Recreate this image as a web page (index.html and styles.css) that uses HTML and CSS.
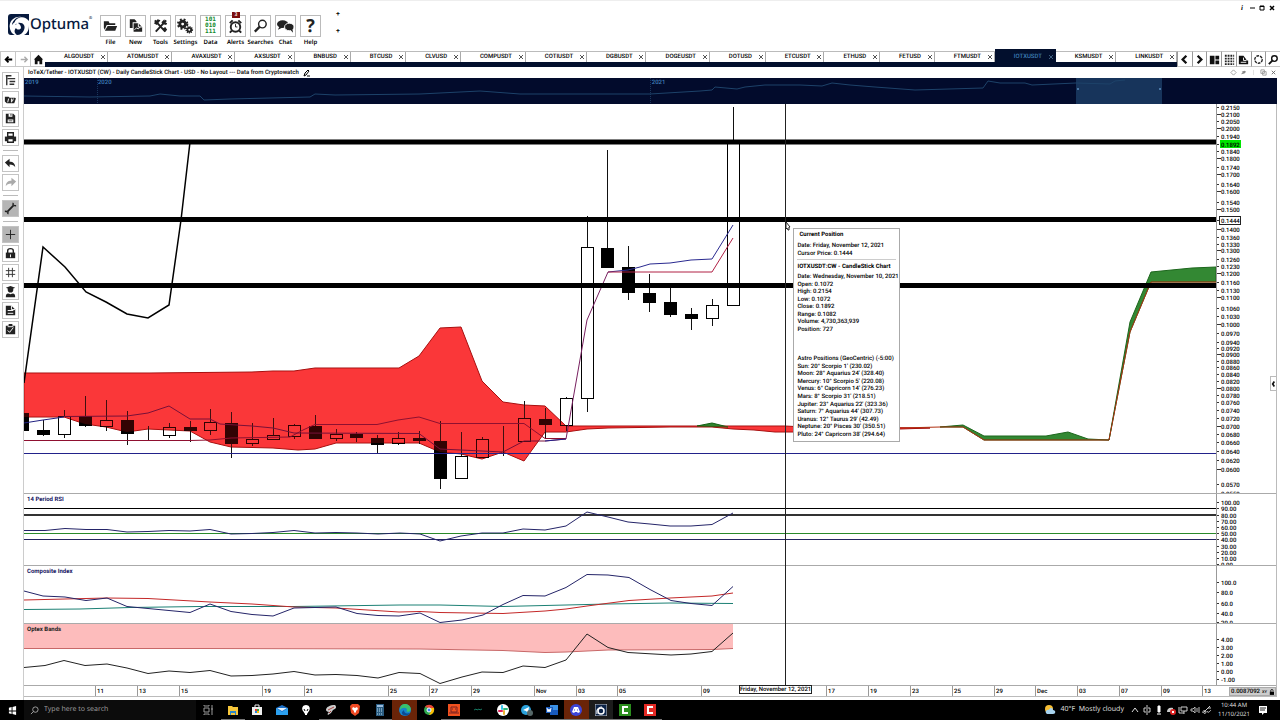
FILE: index.html
```html
<!DOCTYPE html>
<html lang="en">
<head>
<meta charset="utf-8">
<title>Optuma - IOTXUSDT</title>
<link rel="stylesheet" href="styles.css">
</head>
<body>
<header class="app-header">
  <div class="logo">
    <svg class="logo-mark" viewBox="0 0 21 21"><path fill="#071a3e" d="M0 3a3 3 0 0 1 3-3h18v7c-3-4-8-5-12-2-3 2-3 5 0 5-4 1-5 6-2 11H3a3 3 0 0 1-3-3z"/><path fill="#fff" d="M2 15C0 7 7 2 13 3c-6 0-9 5-9 8 2-4 7-5 10-4-6 0-9 5-6 11 1 2 2 3 3 3H7c-3-1-4-3-5-6z"/><path fill="#071a3e" d="M10 9c5-1 8 3 6 7-1 3-4 5-7 5-3-2-3-5-1-7 1 2 4 2 5 0 0-2-1-4-3-5zM21 11v10h-5c4-2 5-6 5-10z"/></svg>
    <span class="logo-name">Optuma</span><span class="logo-reg">®</span>
  </div>
  <nav class="toolbar" aria-label="Main toolbar">
    <button class="tool"><span class="tool-box"><svg viewBox="0 0 20 20"><path d="M3 5h5l1 2h6v2H6l-2 5-1-2zM7 10h10l-2 5H4z"/></svg></span>File</button>
    <button class="tool"><span class="tool-box"><svg viewBox="0 0 20 20"><path d="M4 3h5l2 2v1H7v6H4zM8 7h5l4 4v5H8z"/><path d="M13 7v4h4M9 14l2-2 2 1 2-2" stroke="#fff" fill="none"/></svg></span>New</button>
    <button class="tool"><span class="tool-box"><svg viewBox="0 0 20 20"><path d="M4 4l11 12M16 4L5 16" stroke="#222" stroke-width="2" fill="none"/><path d="M3 7l4-4 3 1-4 5zM14 3l1 3 2 1-1 2-4-1-1-2zM12 13l3-2 2 3-2 2z"/></svg></span>Tools</button>
    <button class="tool"><span class="tool-box"><svg viewBox="0 0 20 20"><circle cx="7" cy="8" r="3" fill="none" stroke="#222" stroke-width="3"/><circle cx="7" cy="8" r="5" fill="none" stroke="#222" stroke-width="2" stroke-dasharray="2 2"/><circle cx="14" cy="14" r="2" fill="none" stroke="#222" stroke-width="2"/><circle cx="14" cy="14" r="3" fill="none" stroke="#222" stroke-width="2" stroke-dasharray="1 1"/></svg></span>Settings</button>
    <button class="tool"><span class="tool-box bits"><i>101</i><i>010</i><i>111</i></span>Data</button>
    <button class="tool"><span class="tool-box"><span class="badge">3</span><svg viewBox="0 0 20 20"><g fill="none" stroke="#222" stroke-width="2"><circle cx="10" cy="11" r="5"/><path d="M4 7l3-3M16 7l-3-3M6 15l-2 2M14 15l2 2"/><path d="M10 8v3h2" stroke-width="1"/></g></svg></span>Alerts</button>
    <button class="tool"><span class="tool-box"><svg viewBox="0 0 20 20"><g fill="none" stroke="#222"><circle cx="12" cy="8" r="4" stroke-width="1.5"/><path d="M9 11l-5 5" stroke-width="2.5"/></g></svg></span>Searches</button>
    <button class="tool"><span class="tool-box"><svg viewBox="0 0 20 20"><ellipse cx="7" cy="8" rx="6" ry="4"/><path d="M4 10l-2 4 6-3z"/><ellipse cx="14" cy="11" rx="5" ry="4" stroke="#fff"/><path d="M15 14l3 3-1-5z"/></svg></span>Chat</button>
    <button class="tool"><span class="tool-box help">?</span>Help</button>
  </nav>
  <div class="plus-stack"><button aria-label="Add row">+</button><button aria-label="Add row below">+</button></div>
  <div class="window-controls">
    <button class="info">i</button>
    <button aria-label="Minimise"><svg viewBox="0 0 6 6"><path d="M1 3h5" stroke="#000"/></svg></button>
    <button aria-label="Maximise"><svg viewBox="0 0 6 6"><path d="M1 1h4v4H1zM1 1.500h4" fill="none" stroke="#000"/></svg></button>
    <button aria-label="Close"><svg viewBox="0 0 6 6"><path d="M1 1l4 4M5 1L1 5" stroke="#000" stroke-width="1.500"/></svg></button>
  </div>
</header>

<div class="tabbar">
  <div class="tab-nav">
    <button aria-label="Back"><svg viewBox="0 0 14 14"><path d="M11 7H4M7 4L4 7l3 3" fill="none" stroke="#000" stroke-width="2"/></svg></button>
    <button aria-label="Forward"><svg viewBox="0 0 14 14"><path d="M4 7h6M8 4l3 3-3 3" fill="none" stroke="#aaa" stroke-width="1.500"/></svg></button>
    <button aria-label="Home"><svg viewBox="0 0 14 14"><path d="M7 2l5 5h-1v5H8V9H6v3H3V7H2z"/></svg></button>
  </div>
  <div class="tabs" id="tabs" role="tablist"></div>
  <div class="tab-tools">
    <button aria-label="Previous"><svg viewBox="0 0 14 14"><path d="M9 3L5 7l4 4" fill="none" stroke="#111" stroke-width="2.500"/></svg></button>
    <button aria-label="Next"><svg viewBox="0 0 14 14"><path d="M5 3l4 4-4 4" fill="none" stroke="#111" stroke-width="2.500"/></svg></button>
    <button aria-label="Layouts"><svg viewBox="0 0 14 14"><path d="M2 3h5v9H2zM8 3h4v4H8zM8 8h4v4H8z"/></svg></button>
    <button aria-label="Grid"><svg viewBox="0 0 14 14"><path d="M2 3h10M2 6h10M2 9h10M2 12h10" stroke="#222" stroke-width="2" stroke-dasharray="2 1"/></svg></button>
    <button aria-label="Export"><svg viewBox="0 0 14 14"><path d="M2 3h5l3 4v1h2v4H2z"/><path d="M7 5v3h3M4 10h6" stroke="#fff" fill="none"/></svg></button>
    <button aria-label="Refresh"><svg viewBox="0 0 14 14"><circle cx="7" cy="7" r="4" fill="none" stroke="#222" stroke-width="1.500" stroke-dasharray="3 1"/></svg></button>
    <button aria-label="Find"><svg viewBox="0 0 14 14"><circle cx="8" cy="6" r="3" fill="none" stroke="#111" stroke-width="1.500"/><path d="M6 8l-4 4" stroke="#111" stroke-width="2"/></svg></button>
  </div>
</div>

<div class="workspace">
  <aside class="sidebar">
    <button aria-label="Structure"><svg viewBox="0 0 16 16"><path d="M3 3h6M4 3v10M5 6h8M7 9h6M7 12h5" fill="none" stroke="#333" stroke-width="1.500"/></svg></button>
    <button aria-label="Open"><svg viewBox="0 0 16 16"><path d="M2 5h4l1 1h6v1l1-1-2 6H4L2 10z"/><path d="M6 7l-1 4M9 7v4M11 7l-1 3" stroke="#fff" fill="none"/></svg></button>
    <button aria-label="Save"><svg viewBox="0 0 16 16"><path d="M3 3h8l2 2v8H3z"/><path fill="#fff" d="M6 3h4v3H6zM5 9h6v3H5z"/><path d="M8 3h1v2H8zM6 10h4v1H6z"/></svg></button>
    <button aria-label="Print"><svg viewBox="0 0 16 16"><path d="M2 7h12v5H2z"/><path d="M5 3h6v4H5zM5 9h6v4H5z" fill="#fff" stroke="#222" stroke-width="1.500"/></svg></button>
    <hr>
    <button aria-label="Undo"><svg viewBox="0 0 16 16"><path d="M2 7l5-4v3c4 0 6 2 6 6-1-2-3-3-6-3v3z"/></svg></button>
    <button aria-label="Redo"><svg viewBox="0 0 16 16"><path fill="#aaa" d="M14 7L9 3v3c-4 0-6 2-6 6 1-2 3-3 6-3v3z"/></svg></button>
    <hr>
    <button class="on" aria-label="Chart tools"><svg viewBox="0 0 16 16"><g fill="none" stroke="#222"><path d="M5 11l6-6" stroke-width="2"/><path d="M11 2c-1 2 0 3 3 3M2 11c3 0 4 1 3 3" stroke-width="1.500"/></g></svg></button>
    <hr>
    <button class="on" aria-label="Crosshair"><svg viewBox="0 0 16 16"><path d="M8 3v10M3 8h10" stroke="#222"/></svg></button>
    <button aria-label="Lock"><svg viewBox="0 0 16 16"><path d="M3 7h10v6H3z"/><path d="M5 8V5c0-3 6-3 6 0v3" fill="none" stroke="#222" stroke-width="1.500"/><path d="M8 9v3" stroke="#fff"/></svg></button>
    <button aria-label="Grid lines"><svg viewBox="0 0 16 16"><path d="M6 3v10M10 3v10M3 6h10M3 10h10" stroke="#333"/></svg></button>
    <button aria-label="Learn"><svg viewBox="0 0 16 16"><path d="M3 4l5-2 5 2-5 2z"/><circle cx="8" cy="6" r="3"/><path d="M3 14c0-5 3-4 5-3 2-1 5-2 5 3z"/></svg></button>
    <button aria-label="Notes"><svg viewBox="0 0 16 16"><path d="M3 3h6l4 4v6H3z"/><path d="M9 3v4h4M5 8h6M5 11h6" stroke="#fff" fill="none"/></svg></button>
    <button aria-label="Checklist"><svg viewBox="0 0 16 16"><path d="M3 4h10v9H3zM6 2h4v2H6z"/><path d="M5 9l2 2 4-5M5 5h6" stroke="#fff" fill="none"/></svg></button>
  </aside>

  <main class="chart-area">
    <div class="chart-title">
      <h1>IoTeX/Tether - IOTXUSDT (CW) - Daily CandleStick Chart - USD - No Layout --- Data from Cryptowatch</h1>
      <svg class="pencil" viewBox="0 0 8 8"><path d="M1 7l1-3 3-3 1 1-3 4zM4 7h3" stroke="#000" fill="none"/></svg>
      <div class="chart-title-tools">
        <svg viewBox="0 0 8 8"><path d="M4 1l3 3-3 3-3-3z" fill="none" stroke="#999"/></svg>
        <svg viewBox="0 0 8 8"><path d="M1 6l2-2-1-1 3-1 2 1-2 2z" fill="#888"/></svg>
        <svg viewBox="0 0 8 8"><path d="M4 1v6" stroke="#ddd"/></svg>
        <svg viewBox="0 0 8 8"><path d="M1 1h4v4H1zM3 3h4v4H3z" fill="none" stroke="#999"/></svg>
        <svg viewBox="0 0 8 8"><path d="M2 2l4 4M6 2L2 6" stroke="#666"/></svg>
      </div>
    </div>
    <div class="overview">
      <svg class="plot" viewBox="24 78 1253 26" preserveAspectRatio="none">
        <rect x="1076" y="78" width="86" height="26" fill="#17345b"/>
        <path d="M97.500 78v26M650.500 78v26" stroke="#1a365c" stroke-dasharray="1 1"/>
        <path d="M1077 89h2M1159 89h2" stroke="#4a77a5" stroke-width="2"/>
        <polyline fill="none" stroke="#1d4269" points="24,96 90,97 150,96 160,94 180,96 200,96 204,100 230,99 310,97 315,94 335,95 420,94 440,93 480,91 520,94 650,94 700,91 712,90 715,87 737,89 745,87 765,85 800,85 822,86 832,83 850,85 875,87 915,90 983,88 988,81 1000,83 1025,83 1032,85 1076,83 1110,84 1115,81 1125,80"/>
      </svg>
      <svg class="years"><text x="1" y="6">2019</text><text x="5.900%" y="6">2020</text><text x="50.100%" y="6">2021</text></svg>
    </div>

    <div class="panels">
      <section class="panel panel-price">
        <svg class="plot" viewBox="24 104 1192 389" preserveAspectRatio="none">
          <g id="cloud"></g>
          <g id="candles"></g>
          <g id="indicators"></g>
        </svg>
        <svg class="axis" id="axis-price"></svg>
      </section>
      <section class="panel panel-rsi">
        <h2>14 Period RSI</h2>
        <svg class="plot" id="plot-rsi" viewBox="24 494 1192 71" preserveAspectRatio="none"></svg>
        <svg class="axis" id="axis-rsi"></svg>
      </section>
      <section class="panel panel-composite">
        <h2>Composite Index</h2>
        <svg class="plot" id="plot-composite" viewBox="24 566 1192 57" preserveAspectRatio="none"></svg>
        <svg class="axis" id="axis-composite"></svg>
      </section>
      <section class="panel panel-optex">
        <h2 class="dark">Optex Bands</h2>
        <svg class="plot" id="plot-optex" viewBox="24 624 1192 61" preserveAspectRatio="none"></svg>
        <svg class="axis" id="axis-optex"></svg>
      </section>
      <div class="overlay">
        <div class="crosshair"></div>
        <svg class="pointer" viewBox="0 0 6 10"><path d="M1 1v7l1-1 1 2h1V6h1z" fill="#fff" stroke="#222"/></svg>
        <div class="info-card">
          <h3 class="indent">Current Position</h3>
          <ul class="rows-2"><li>Date: Friday, November 12, 2021</li><li>Cursor Price: 0.1444</li></ul>
          <hr>
          <h3>IOTXUSDT:CW - CandleStick Chart</h3>
          <ul class="rows-8"><li>Date: Wednesday, November 10, 2021</li><li>Open: 0.1072</li><li>High: 0.2154</li><li>Low: 0.1072</li><li>Close: 0.1892</li><li>Range: 0.1082</li><li>Volume: 4,730,363,939</li><li>Position: 727</li></ul>
          <ul class="rows-11"><li>Astro Positions (GeoCentric) (-5:00)</li><li>Sun: 20° Scorpio 1' (230.02)</li><li>Moon: 28° Aquarius 24' (328.40)</li><li>Mercury: 10° Scorpio 5' (220.08)</li><li>Venus: 6° Capricorn 14' (276.23)</li><li>Mars: 8° Scorpio 31' (218.51)</li><li>Jupiter: 23° Aquarius 22' (323.36)</li><li>Saturn: 7° Aquarius 44' (307.73)</li><li>Uranus: 12° Taurus 29' (42.49)</li><li>Neptune: 20° Pisces 30' (350.51)</li><li>Pluto: 24° Capricorn 38' (294.64)</li></ul>
        </div>
      </div>
      <button class="drawer" aria-label="Open panel"><svg viewBox="0 0 6 10"><path d="M4 2L2 5l2 3" fill="none" stroke="#111" stroke-width="2"/></svg></button>
    </div>

    <div class="date-axis">
      <svg id="date-ticks"></svg>
      <span class="date-flag">Friday, November 12, 2021</span>
      <div class="scale-box"><span>0.0087092</span><span>XY</span><svg viewBox="0 0 6 7"><path d="M1 3h5v4H1z"/><path d="M2 3V2c0-2 3-2 3 0" fill="none" stroke="#000"/></svg></div>
    </div>
  </main>
</div>

<footer class="taskbar">
  <button class="start" aria-label="Start"><svg viewBox="0 0 10 10"><path fill="#fff" d="M1 2l3-1v4H1zM5 1l4-1v5H5zM1 6h3v3L1 8zM5 6h4v4L5 9z"/></svg></button>
  <label class="search"><svg viewBox="0 0 10 10"><circle cx="6" cy="4" r="3" fill="none" stroke="#aaa"/><path d="M4 6L1 9" stroke="#aaa"/></svg><input type="text" placeholder="Type here to search" aria-label="Search"></label>
  <div class="apps">
    <button aria-label="Task view"><svg viewBox="0 0 12 12"><path d="M2 4h5v4H2zM2 1v1h5V1M2 11v-1h5v1M10 1v10M9 5h2" fill="none" stroke="#999"/></svg></button>
    <button class="open" aria-label="File Explorer"><svg viewBox="0 0 12 12"><path fill="#f6c63a" d="M1 2h4l1 1h5v8H1z"/><path fill="#2c87c9" d="M3 7h6v4H8V9H4v2H3z"/></svg></button>
    <button aria-label="Store"><svg viewBox="0 0 12 12"><path fill="#eee" d="M1 3h10v8H1z"/><path d="M4 3V1h4v2" fill="none" stroke="#eee"/><path fill="#e33" d="M4 5h2v2H4z"/><path fill="#3a4" d="M6 5h2v2H6z"/><path fill="#28d" d="M4 7h2v2H4z"/><path fill="#fb0" d="M6 7h2v2H6z"/></svg></button>
    <button aria-label="Mail"><svg viewBox="0 0 12 12"><path fill="#1c70c8" d="M0 4l6-3 6 3v7H0z"/><path fill="#e5f2fc" d="M1 4h10L6 7z"/><path fill="#2ba0ef" d="M0 4l6 4 6-4v7H0z"/></svg></button>
    <button aria-label="Alienware"><svg viewBox="0 0 12 12"><path fill="#fff" d="M6 1c3 0 5 3 3 6l-2 3v1H5v-1L3 7C1 4 3 1 6 1z"/><path d="M4 5l1 2M8 5L7 7" stroke="#000"/></svg></button>
    <button class="open" aria-label="Satellite"><svg viewBox="0 0 12 12"><path fill="#ccc" d="M1 6c0-3 4-5 9-5 2 2 1 4-2 5l-2 3-3 2c-1-1 0-2 1-3-1 0-3-1-3-2z"/><path d="M3 6l6-3M4 9l2-2" stroke="#a44"/></svg></button>
    <button class="open" aria-label="Brave"><svg viewBox="0 0 12 12"><path fill="#f04a24" d="M3 0h6l2 2-1 7-4 3-4-3-1-7z"/><path d="M4 3l2 1 2-1 1 2-2 2v1l-1 1-1-1V7L3 5z" fill="#fff"/></svg></button>
    <button class="open" aria-label="Calculator"><svg viewBox="0 0 12 12"><path fill="#2b5d82" d="M2 0h8v12H2z"/><path d="M3 2h6" stroke="#9bd" stroke-width="2"/><path d="M3 5h6M3 7h6M3 10h6" stroke="#bde" stroke-dasharray="1 1"/></svg></button>
    <button class="hot" aria-label="Edge"><svg viewBox="0 0 12 12"><circle cx="6" cy="6" r="6" fill="#1684c9"/><path fill="#39c16c" d="M6 0c5 0 7 5 5 7-3 2-4 0-3-1 0-3-5-3-7 0 0-4 2-6 5-6z"/><path fill="#0b4c94" d="M5 6c0 3 2 4 6 3-2 4-9 3-8-1z"/></svg></button>
    <button aria-label="Chrome"><svg viewBox="0 0 12 12"><circle cx="6" cy="6" r="5" fill="#2da94f"/><path fill="#e94335" d="M2 3c2-3 7-3 9 1H6z"/><path fill="#fbbc05" d="M11 4c1 4-2 7-5 7l2-4V4z"/><circle cx="6" cy="6" r="2" fill="#4285f4" stroke="#fff"/></svg></button>
    <button class="open" aria-label="Orange bot"><svg viewBox="0 0 12 12"><path fill="#f0511f" d="M0 0h12v12H0z"/><path d="M3 3h6v5H3zM1 9h10M4 5h1M7 5h1" fill="none" stroke="#722"/></svg></button>
    <button class="open" aria-label="TradingView"><svg viewBox="0 0 12 12"><path d="M2 6l2-1 1 1 2-1 1 1 2-1" fill="none" stroke="#177b64"/></svg></button>
    <button class="open" aria-label="Slack"><svg viewBox="0 0 12 12"><circle cx="6" cy="6" r="6" fill="#fff"/><g stroke-width="2" stroke-linecap="round"><path d="M5 2v3" stroke="#36c5f0"/><path d="M7 5h3" stroke="#2eb67d"/><path d="M7 7v3" stroke="#ecb22e"/><path d="M2 7h3" stroke="#e01e5a"/></g></svg></button>
    <button class="open" aria-label="Telegram"><svg viewBox="0 0 12 12"><circle cx="5" cy="6" r="5" fill="#2aa1da"/><path fill="#fff" d="M2 6l6-3-1 6-2-2z"/><circle cx="9" cy="9" r="3" fill="#566"/></svg></button>
    <button class="open" aria-label="Word"><svg viewBox="0 0 12 12"><path fill="#3b91e5" d="M4 1h8v10H4z"/><path fill="#185abd" d="M0 3h7v6H0zM7 6h5v5H4V9h3z"/><path d="M1 4l1 4 1-3 1 3 1-4" stroke="#fff" fill="none"/></svg></button>
    <button class="hot open" aria-label="Discord"><svg viewBox="0 0 12 12"><circle cx="6" cy="6" r="6" fill="#3d45d8"/><path fill="#fff" d="M4 3h4l2 5-2 1-1-1H5L4 9 2 8z"/><path d="M4 6h1M7 6h1" stroke="#3d45d8"/></svg></button>
    <button class="warm open" aria-label="Optuma"><svg viewBox="0 0 12 12"><path d="M0 0h12v12H0z" fill="#0b2348" stroke="#ccc"/><circle cx="6" cy="7" r="3" fill="none" stroke="#fff" stroke-width="1.500"/><path d="M2 10c-1-4 1-7 5-7" fill="none" stroke="#fff"/></svg></button>
    <button class="open" aria-label="Camtasia"><svg viewBox="0 0 12 12"><path fill="#2b8d1d" d="M0 0h12v12H0z"/><path d="M9 3H4v6h5" stroke="#fff" stroke-width="2" fill="none"/></svg></button>
    <button class="open" aria-label="Recorder"><svg viewBox="0 0 12 12"><path fill="#e52a25" d="M0 0h12v12H0z"/><path d="M9 3H4v6h5" stroke="#fff" stroke-width="2" fill="none"/></svg></button>
  </div>
  <div class="tray">
    <svg class="weather-icon" viewBox="0 0 12 10"><circle cx="5" cy="4" r="4" fill="#f5bd34"/><path fill="#a8d3ee" d="M3 9c-3-2 0-5 2-4 1-3 4-2 4 0 3 0 3 4 0 4z"/></svg>
    <span class="weather">40°F&nbsp; Mostly cloudy</span>
    <svg viewBox="0 0 10 10"><path d="M2 7l3-4 3 4" fill="none" stroke="#ddd"/></svg>
    <svg viewBox="0 0 10 10"><path d="M2 3h6v4H2zM4 1h2M4 9h2M5 4v2" fill="none" stroke="#ccc"/></svg>
    <svg viewBox="0 0 10 10"><path d="M4 1h2v6H4zM3 9h4" fill="#fff" stroke="#fff"/></svg>
    <svg viewBox="0 0 10 10"><path fill="#ccc" d="M1 7c0-3 2-5 6-4v4z"/><circle cx="7" cy="7" r="3" fill="#d22"/><path d="M6 6l2 2M8 6L6 8" stroke="#fff"/></svg>
    <svg viewBox="0 0 10 10"><path d="M3 2h6v4H3zM1 2v6h5M6 6v3" fill="none" stroke="#ccc"/></svg>
    <svg viewBox="0 0 10 10"><path d="M1 4h2l2-2v6L3 6H1zM7 3v4M9 2v6" fill="none" stroke="#bbb"/></svg>
    <svg viewBox="0 0 10 10"><path d="M1 8c-1-3 3-3 3-1s-3 2-2 0L8 1M5 6c1 3 3 0 4-1M6 3h3" fill="none" stroke="#ccc"/></svg>
    <div class="clock"><span>10:44 AM</span><span>11/10/2021</span></div>
    <svg viewBox="0 0 10 10"><path fill="#fff" d="M1 1h8v7H6L4 10V8H1z"/><path d="M2 3h6M2 5h5" stroke="#222"/></svg>
  </div>
</footer>
<script src="app.js"></script>
</body>
</html>
```
FILE: styles.css
```css
* { box-sizing: border-box; }
body {
  margin: 0;
  height: 100vh;
  display: flex;
  flex-direction: column;
  overflow: hidden;
  background: #fff;
  color: #000;
  font: 500 6px/8px Roboto, "Noto Sans", sans-serif;
  text-rendering: geometricPrecision;
}
button {
  margin: 0;
  padding: 0;
  border: 0;
  background: none;
  color: inherit;
  font: inherit;
  text-rendering: inherit;
}
svg { display: block; }
h1, h2, h3, ul { margin: 0; padding: 0; font: inherit; list-style: none; }

/* Header */
.app-header {
  height: 51px;
  flex: none;
  display: flex;
  border-top: 1px solid #eee;
  padding-left: 8px;
}
.logo { display: flex; width: 90px; padding-top: 13px; color: #071a3e; }
.logo-mark { width: 21px; height: 21px; }
.logo-name { font: 500 15px/21px "Noto Sans", sans-serif; margin-left: 1px; }
.logo-reg { font-size: 4px; }
.toolbar { display: flex; padding-top: 14px; font: 600 6px/8px "Noto Sans", sans-serif; }
.tool { width: 25px; display: flex; flex-direction: column; align-items: center; gap: 1px; height: 30px; }
.tool-box { position: relative; width: 21px; height: 22px; flex: none; border: 1px solid #bbb; display: flex; flex-direction: column; align-items: center; justify-content: center; }
.tool-box svg { width: 19px; height: 20px; fill: #222; }
.bits { font: bold 6px/6px "DejaVu Sans Mono", monospace; color: #128a2e; }
.bits i { font-style: normal; }
.help { font: bold 18px/18px "Open Sans", sans-serif; color: #222; }
.badge { position: absolute; top: -4px; left: 6px; width: 8px; height: 6px; background: #7c0d0d; color: #fff; font-size: 5px; line-height: 6px; text-align: center; }
.plus-stack { display: flex; flex-direction: column; gap: 9px; padding: 9px 0 0 13px; font-size: 7px; }
.window-controls { margin-left: auto; display: flex; gap: 4px; padding: 3px 5px 0 0; height: 10px; }
.window-controls svg { width: 6px; height: 6px; }
.info { font: italic bold 7px/6px "Liberation Serif", serif; width: 6px; }

/* Tabs */
.tabbar { flex: none; height: 16px; display: flex; align-items: stretch; }
.tab-nav, .tab-tools { display: flex; }
.tab-tools { width: 103px; }
.tab-nav button, .tab-tools button { width: 15px; border: 1px solid #c8c8c8; border-right: 0; display: flex; align-items: center; justify-content: center; }
.tab-tools button { flex: 1; border-left-color: #999; }
.tab-nav svg, .tab-tools svg { width: 13px; height: 13px; flex: none; fill: #111; }
.tabs { flex: 1; min-width: 0; display: flex; border-top: 1px solid #bbb; border-bottom: 5px solid #020f2d; }
.tab { flex: 1 1 auto; display: flex; align-items: center; justify-content: space-between; padding: 0 1px 0 19px; border-right: 1px solid #aaa; gap: 3px; line-height: 8px; }
.tab svg { width: 6px; height: 6px; stroke: #555; }
.tab.active { margin-top: -3px; background: #020f2d; color: #3e7fb8; border-right-color: #020f2d; padding-top: 2px; }
.tab.active svg { stroke: #3e5f80; }

/* Workspace */
.workspace { flex: 1; min-height: 0; display: flex; }
.sidebar { width: 24px; flex: none; display: flex; flex-direction: column; gap: 2px; padding: 5px 0 0 2px; border-right: 1px solid #ccc; }
.sidebar button { width: 17px; height: 17px; flex: none; border: 1px solid #c4c4c4; display: flex; align-items: center; justify-content: center; }
.sidebar svg { width: 15px; height: 15px; fill: #222; }
.sidebar .on { background: #b5b5b5; }
.sidebar hr { width: 15px; height: 1px; flex: none; border: 0; background: #bbb; margin: 2px 0 2px 1px; }
.chart-area { flex: 1; min-width: 0; display: flex; flex-direction: column; padding: 0 3px 3px 0; }
.chart-title { height: 11px; flex: none; display: flex; align-items: center; gap: 4px; padding-left: 4px; }
.pencil { width: 8px; height: 8px; }
.chart-title-tools { margin-left: auto; display: flex; gap: 3px; }
.chart-title-tools svg { width: 7px; height: 7px; }
.overview { height: 26px; flex: none; position: relative; background: #020b2c; display: flex; }
.years { position: absolute; inset: 0; width: 100%; height: 100%; fill: #3e7fb8; }
.plot { flex: 1; min-width: 0; width: 100%; height: 100%; }

.panels { flex: 1; min-height: 0; position: relative; display: flex; flex-direction: column; border-right: 1px solid #bbb; }
.panel { position: relative; min-height: 0; display: flex; border-bottom: 1px solid #aaa; }
.panel-price { flex: 389 1 0; }
.panel-rsi { flex: 71 1 0; }
.panel-composite { flex: 57 1 0; }
.panel-optex { flex: 61 1 0; }
.panel h2 { position: absolute; left: 3px; top: 2px; font-weight: bold; color: #14145f; }
.panel h2.dark { color: #222; }
.axis { width: 60px; height: 100%; flex: none; border-left: 1px solid #999; overflow: hidden; }
.overlay { position: absolute; inset: 0 60px 0 0; }
.crosshair { position: absolute; left: 63.850%; top: 0; bottom: 0; width: 1px; background: #222; }
.pointer { position: absolute; left: 63.850%; top: 117px; width: 6px; height: 10px; }
.info-card { position: absolute; left: 64.550%; top: 124px; width: 107px; padding: 1px 3px 3px; background: #fff; border: 1px solid #aaa; white-space: nowrap; }
.info-card h3 { font-weight: 700; line-height: 9px; }
.info-card .indent { padding-left: 2px; }
.info-card ul { display: grid; grid-auto-rows: 1fr; align-items: center; line-height: 7px; }
.info-card hr { height: 1px; border: 0; background: #ccc; margin: 2px 0; }
.info-card .rows-2 { height: 15px; margin-top: 3px; }
.info-card .rows-8 { height: 60px; margin-top: 2px; }
.info-card .rows-11 { height: 83px; margin-top: 22px; }
.drawer { position: absolute; right: 0; top: 272px; width: 6px; height: 15px; border: 1px solid #bbb; border-right: 0; background: #fff; }
.drawer svg { width: 5px; height: 10px; }

.date-axis { height: 11px; flex: none; position: relative; border-bottom: 1px solid #bbb; border-right: 1px solid #bbb; }
#date-ticks { width: 100%; height: 100%; }
.date-flag { position: absolute; left: 57.100%; top: -1px; border: 1px solid #222; background: #fff; line-height: 7px; white-space: nowrap; }
.scale-box { position: absolute; right: 0; bottom: 0; display: flex; align-items: center; gap: 2px; background: #ccc; border: 1px solid #aaa; line-height: 7px; padding: 0 1px; }
.scale-box span + span { font-size: 4px; }
.scale-box svg { width: 5px; height: 6px; }

/* Taskbar */
.taskbar { height: 20px; flex: none; display: flex; align-items: stretch; background: #000; color: #ddd; font-family: "Noto Sans", sans-serif; }
.start { width: 24px; display: flex; align-items: center; justify-content: center; }
.start svg { width: 9px; height: 9px; }
.search { width: 172px; display: flex; align-items: center; gap: 5px; padding-left: 6px; background: #0c0c0c; }
.search svg { width: 9px; height: 9px; }
.search input { flex: 1; min-width: 0; border: 0; padding: 0; background: none; color: #ccc; font: 400 7px/10px "Noto Sans", sans-serif; text-rendering: inherit; }
.search input::placeholder { color: #9a9a9a; }
.apps { width: 466px; display: flex; }
.apps button { flex: 1; display: flex; align-items: center; justify-content: center; }
.apps svg { width: 12px; height: 12px; }
.apps .open { box-shadow: inset 0 -1px #777; }
.apps .hot { background: #6a2408; }
.apps .warm { background: #1c1c1c; }
.tray { margin-left: auto; display: flex; align-items: center; gap: 2px; padding-right: 12px; }
.tray svg { width: 10px; height: 10px; }
.tray .weather-icon { width: 12px; }
.weather { font-size: 7px; line-height: 10px; font-weight: 400; margin: 0 4px 0 2px; }
.clock { display: flex; flex-direction: column; align-items: center; line-height: 9px; font-weight: 400; width: 34px; margin: 0 5px 0 3px; }

svg text { font: 500 6px/8px Roboto, "Noto Sans", sans-serif; }
```
FILE: app.js
```js
const NS = "http://www.w3.org/2000/svg";
const byId = (id) => document.getElementById(id);

function add(parent, tag, attrs, text) {
  const node = document.createElementNS(NS, tag);
  for (const key in attrs) node.setAttribute(key, attrs[key]);
  if (text !== undefined) node.textContent = text;
  parent.appendChild(node);
  return node;
}
const line = (parent, points, stroke, width = 1) =>
  add(parent, "polyline", { points, stroke, fill: "none", "stroke-width": width });
const level = (parent, y, stroke, width = 1) =>
  line(parent, `24,${y} 1216,${y}`, stroke, width);

// Tabs
const symbols = ["ALGOUSDT", "ATOMUSDT", "AVAXUSDT", "AXSUSDT", "BNBUSD", "BTCUSD", "CLVUSD", "COMPUSDT", "COTIUSDT", "DGBUSDT", "DOGEUSDT", "DOTUSD", "ETCUSDT", "ETHUSD", "FETUSD", "FTMUSDT", "IOTXUSDT", "KSMUSDT", "LINKUSDT"];
for (const symbol of symbols) {
  const tab = document.createElement("button");
  tab.className = symbol === "IOTXUSDT" ? "tab active" : "tab";
  tab.setAttribute("role", "tab");
  tab.append(symbol);
  const svg = add(tab, "svg", { viewBox: "0 0 6 6" });
  add(svg, "path", { d: "M1 1l4 4M5 1L1 5" });
  byId("tabs").append(tab);
}

// Ichimoku cloud
const redCloud = "24,373 150,373 252,372 273,371 294,371 315,368 399,368 419,356 440,328 461,327 482,381 503,402 524,405 545,406 566,426 785,426 804,427 930,428 900,429 794,432 775,432 754,430 733,429 712,427 670,427 608,428 587,429 566,432 545,432 524,461 503,452 482,459 461,454 440,452 419,443 336,443 315,449 298,450 273,448 231,447 210,442 190,431 148,429 127,432 106,427 85,424 64,417 24,417";
const cloud = byId("cloud");
add(cloud, "polygon", { points: redCloud, fill: "#fa4244", stroke: "#a01010" });
add(cloud, "polygon", { points: "697,426 712,423 728,427", fill: "#2f852f", stroke: "#146014" });
add(cloud, "polygon", { points: "940,427 963,425 984,436 1046,436 1068,432 1088,439 1109,440 1130,322 1151,272 1192,268 1216,267 1216,282 1151,282 1130,332 1109,440 984,440 963,427", fill: "#338833", stroke: "#1c661c" });
line(cloud, "900,428 940,427 963,427 984,440 1109,440 1130,332 1151,282 1216,282", "#b03010");

// Candles: x, high, body top, body bottom, low, hollow
const candles = [
  [22, 413, 413, 430, 430, 0], [43, 420, 430, 434, 436, 0], [64, 410, 416, 434, 438, 1], [85, 396, 416, 425, 427, 0],
  [106, 400, 420, 426, 431, 1], [127, 411, 420, 433, 445, 0], [148, 426, 434, 434, 441, 0], [169, 423, 427, 435, 438, 1],
  [190, 421, 427, 430, 442, 0], [210, 409, 422, 430, 435, 1], [231, 412, 423, 443, 458, 0], [252, 423, 439, 443, 446, 1],
  [273, 418, 435, 439, 440, 1], [294, 424, 425, 436, 439, 1], [315, 415, 426, 438, 439, 0], [336, 429, 434, 438, 441, 1],
  [356, 432, 434, 437, 442, 0], [377, 435, 438, 444, 453, 0], [398, 432, 438, 443, 445, 1], [419, 431, 438, 440, 444, 0],
  [440, 421, 441, 478, 489, 0], [461, 432, 456, 478, 478, 1], [482, 437, 439, 457, 458, 1], [503, 426, 440, 440, 456, 0],
  [524, 401, 418, 441, 441, 1], [545, 408, 419, 424, 438, 0], [566, 397, 398, 425, 431, 1], [587, 216, 247, 398, 412, 1],
  [607, 150, 248, 267, 268, 0], [628, 246, 267, 292, 300, 0], [649, 274, 293, 302, 312, 0], [670, 288, 302, 314, 317, 0],
  [691, 308, 314, 318, 330, 0], [712, 299, 305, 318, 326, 1], [733, 107, 143, 305, 305, 1],
];
const group = byId("candles");
for (const [x, high, top, bottom, low, hollow] of candles) {
  const c = x + 0.5;
  add(group, "path", { d: `M${c} ${high}V${top}M${c} ${bottom}V${low}`, stroke: "#111" });
  add(group, "rect", { x: c - 6, y: top + 0.5, width: 12, height: bottom - top, fill: hollow ? "none" : "#000", stroke: "#000" });
}

// Tint over the candles, then indicator lines
const ind = byId("indicators");
add(ind, "polygon", { points: redCloud, fill: "#fa1010", "fill-opacity": 0.2 });
line(ind, "24,440.5 190,440.5 210,440 231,438 290,437 303,430 315,424.5 377,424.5 398,420 419,417 440,423.5 524,423.5 545,438.5 566,438.5", "#8f1030");
line(ind, "24,423 43,420 64,417", "#202080");
line(ind, "64,416.5 127,416 148,413 169,406 190,419 210,419 220,424 252,426 273,428 294,433 419,433.5 440,449 503,452 524,441 545,441 566,439", "#781038");
line(ind, "545,441 566,439", "#202090");
line(ind, "566,439 587,320 608,272", "#782060");
line(ind, "608,272 628,270 640,267 650,264 670,263 691,260 712,259 733,225", "#2a2a90");
line(ind, "608,272 712,272 733,238", "#b02045");
level(ind, 453.5, "#22228a");
line(ind, "24,383 43,247 65,267 86,292 106,302 127,314 148,318 169,305 181,220 190,142", "#000", 1.5);
for (const y of [142, 219.5, 285.5]) level(ind, y, "#000", 5);

// RSI
const rsi = byId("plot-rsi");
level(rsi, 508.5, "#000");
level(rsi, 515, "#333", 2);
level(rsi, 533.5, "#2a8a2a");
level(rsi, 539.5, "#242460");
line(rsi, "24,530.5 45,530.5 65,528.5 86,529.5 107,529.5 127,532 148,531.5 169,530.5 190,531 210,529.5 231,534 252,533.5 273,532.5 294,530.5 315,533 336,532.5 357,533 378,534 400,533 420,534 440,541 461,536 482,533 503,533 523,529 545,530 566,526 587,512 608,517 628,522 650,524 670,526 691,526 712,524.5 733,513", "#242468");

// Composite index
const comp = byId("plot-composite");
line(comp, "24,609.5 80,609 130,607.5 200,606.5 294,606.5 400,605 440,605 503,606.5 566,605 608,604 670,603 733,603.5", "#1b8074");
line(comp, "24,600 65,599 107,598 148,598.5 210,602 252,604 294,607 336,608 399,612 420,611.5 440,612.5 503,613.5 545,611 566,609 587,606 629,600.5 670,598 712,596 733,593", "#c42828");
line(comp, "24,591 43,596 65,597 86,600.5 107,598 127,606.5 148,608.5 190,612.5 210,604 231,611.5 252,614.5 273,616 294,608 336,607 357,613.5 378,615.5 399,616 420,613 440,622.5 462,620 483,615 503,604.5 523,595.5 545,596 566,587.5 587,574.5 608,575 629,577.5 650,589.5 671,600.5 691,603.5 712,605.5 733,586.5", "#242468");

// Optex bands
const optex = byId("plot-optex");
const band = "24,648.5 200,648.5 420,649 503,650.5 545,652.5 566,652 587,651 608,650 712,649.5 733,648.5";
add(optex, "polygon", { points: `24,624 ${band} 733,624`, fill: "#fdbcbc" });
line(optex, band, "#c86868");
line(optex, "24,667.5 45,665.5 64,660.5 85,665.5 107,664 127,668 148,673.5 169,671 190,672.5 210,670.5 231,676 252,675.5 273,674 294,671.5 315,675 336,674.5 357,675.5 378,678 399,672.5 420,673.5 440,683.5 462,677 482,672 503,672.5 523,666 545,667.5 566,660 587,634 608,647.5 628,652.5 671,655 691,654 712,651.5 733,633", "#222");

// Value axes
function axis(id, top, height, labels) {
  const svg = byId(id);
  for (const [y, text, kind] of labels) {
    const g = add(svg, "svg", { y: `${((y - top) / height) * 100}%`, overflow: "visible" });
    if (kind === "last") add(g, "rect", { x: 3, y: -4, width: 21, height: 8, fill: "#00e400" });
    add(g, "path", { d: kind === "major" ? "M0 .5H4" : "M0 .5H2", stroke: "#333" });
    if (kind === "cursor") add(g, "rect", { x: 2.5, y: -3.5, width: 21, height: 8, fill: "#fff", stroke: "#222" });
    add(g, "text", { x: 4, y: 3 }, text);
  }
}
axis("axis-price", 104, 389, [
  [107, "0.2150"], [114, "0.2100", "major"], [121, "0.2050"], [128, "0.2000", "major"], [136, "0.1940"], [144, "0.1892", "last"],
  [151, "0.1840"], [158, "0.1800", "major"], [167, "0.1740"], [174, "0.1700", "major"], [184, "0.1640"], [191, "0.1600", "major"],
  [202, "0.1540"], [209, "0.1500", "major"], [220, "0.1444", "cursor"], [229, "0.1400", "major"], [237, "0.1360"], [244, "0.1330"],
  [250, "0.1300", "major"], [259, "0.1260"], [266, "0.1230"], [273, "0.1200", "major"], [282, "0.1160"], [290, "0.1130"],
  [297, "0.1100", "major"], [308, "0.1060"], [316, "0.1030"], [324, "0.1000", "major"], [333, "0.0970"], [342, "0.0940"],
  [348, "0.0920"], [354, "0.0900", "major"], [361, "0.0880"], [367, "0.0860"], [374, "0.0840"], [381, "0.0820"],
  [388, "0.0800", "major"], [395, "0.0780"], [402, "0.0760"], [410, "0.0740"], [418, "0.0720"], [426, "0.0700", "major"],
  [434, "0.0680"], [442, "0.0660"], [451, "0.0640"], [460, "0.0620"], [469, "0.0600", "major"], [484, "0.0570"], [493, "0.0550"],
]);
axis("axis-rsi", 494, 71, [[502, "100.00"], [508, "90.00"], [515, "80.00"], [521, "70.00"], [527, "60.00"], [533, "50.00"], [539, "40.00"], [546, "30.00"], [552, "20.00"], [558, "10.00"], [564, "0.00"]]);
axis("axis-composite", 566, 57, [[582, "100.0"], [592, "80.0"], [603, "60.0"], [613, "40.0"], [622, "20.0"]]);
axis("axis-optex", 624, 61, [[639, "4.00"], [647, "3.00"], [655, "2.00"], [663, "1.00"], [671, "0.00"], [679, "-1.00"]]);

// Date axis
const dates = [[95, "11"], [137, "13"], [179, "15"], [262, "19"], [304, "21"], [388, "25"], [429, "27"], [471, "29"], [534, "Nov"], [576, "03"], [617, "05"], [701, "09"], [826, "17"], [868, "19"], [910, "23"], [952, "25"], [994, "29"], [1035, "Dec"], [1077, "03"], [1119, "07"], [1161, "09"], [1202, "13"]];
for (const [x, text] of dates) {
  const g = add(byId("date-ticks"), "svg", { x: `${((x - 24) / 1252) * 100}%`, overflow: "visible" });
  add(g, "path", { d: "M.5 0V11", stroke: "#999" });
  add(g, "text", { x: 2, y: 7 }, text);
}
```
